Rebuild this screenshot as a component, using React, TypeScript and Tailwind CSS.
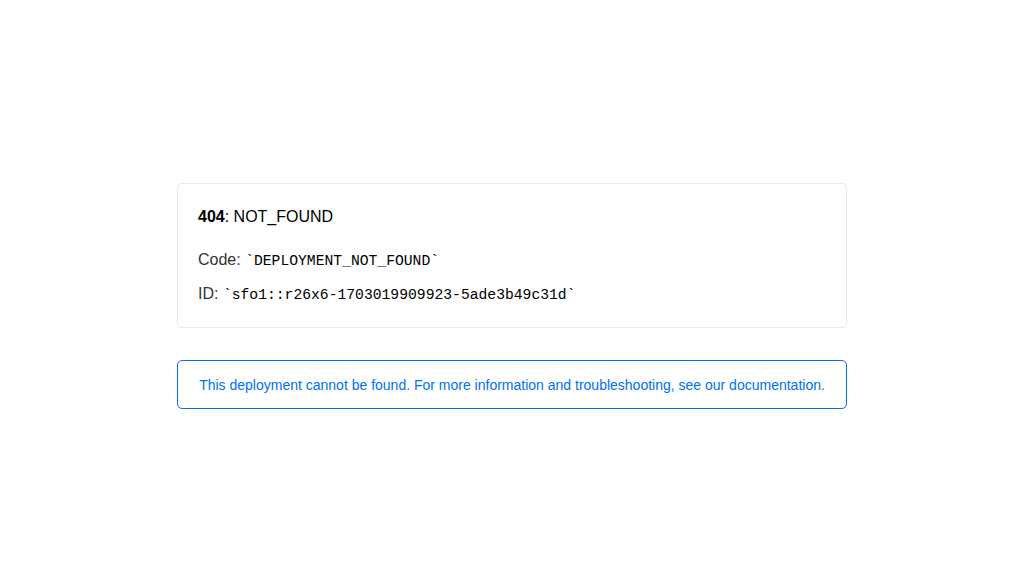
export default function App() {
  return (
    <main className="flex h-[576px] w-full items-center justify-center bg-white font-['Liberation_Sans',Arial,sans-serif]">
      <div className="mt-[15px] flex w-[670px] flex-col gap-[32px]">
        {/* error details */}
        <div className="rounded-[5px] border border-[#eaeaea] px-[20px] pt-[21px] pb-[20px]">
          <p className="text-[16px] leading-[24px] text-black">
            <span className="font-bold">404</span>: NOT_FOUND
          </p>
          <p className="mt-[19px] text-[16px] leading-[24px] text-[#333]">
            Code:{" "}
            <code className="font-['Liberation_Mono','Courier_New',monospace] text-[14.7px] leading-[24px] text-black">
              `DEPLOYMENT_NOT_FOUND`
            </code>
          </p>
          <p className="mt-[9px] text-[16px] leading-[24px] text-[#333]">
            ID:{" "}
            <code className="font-['Liberation_Mono','Courier_New',monospace] text-[14.7px] leading-[24px] text-black">
              `sfo1::r26x6-1703019909923-5ade3b49c31d`
            </code>
          </p>
        </div>

        {/* docs link */}
        <a
          href="#"
          className="block rounded-[5px] border border-[#0070f3] pt-[13px] pb-[12px] text-center text-[14px] leading-[22px] text-[#0070f3]"
        >
          This deployment cannot be found. For more information and troubleshooting, see our documentation.
        </a>
      </div>
    </main>
  );
}
